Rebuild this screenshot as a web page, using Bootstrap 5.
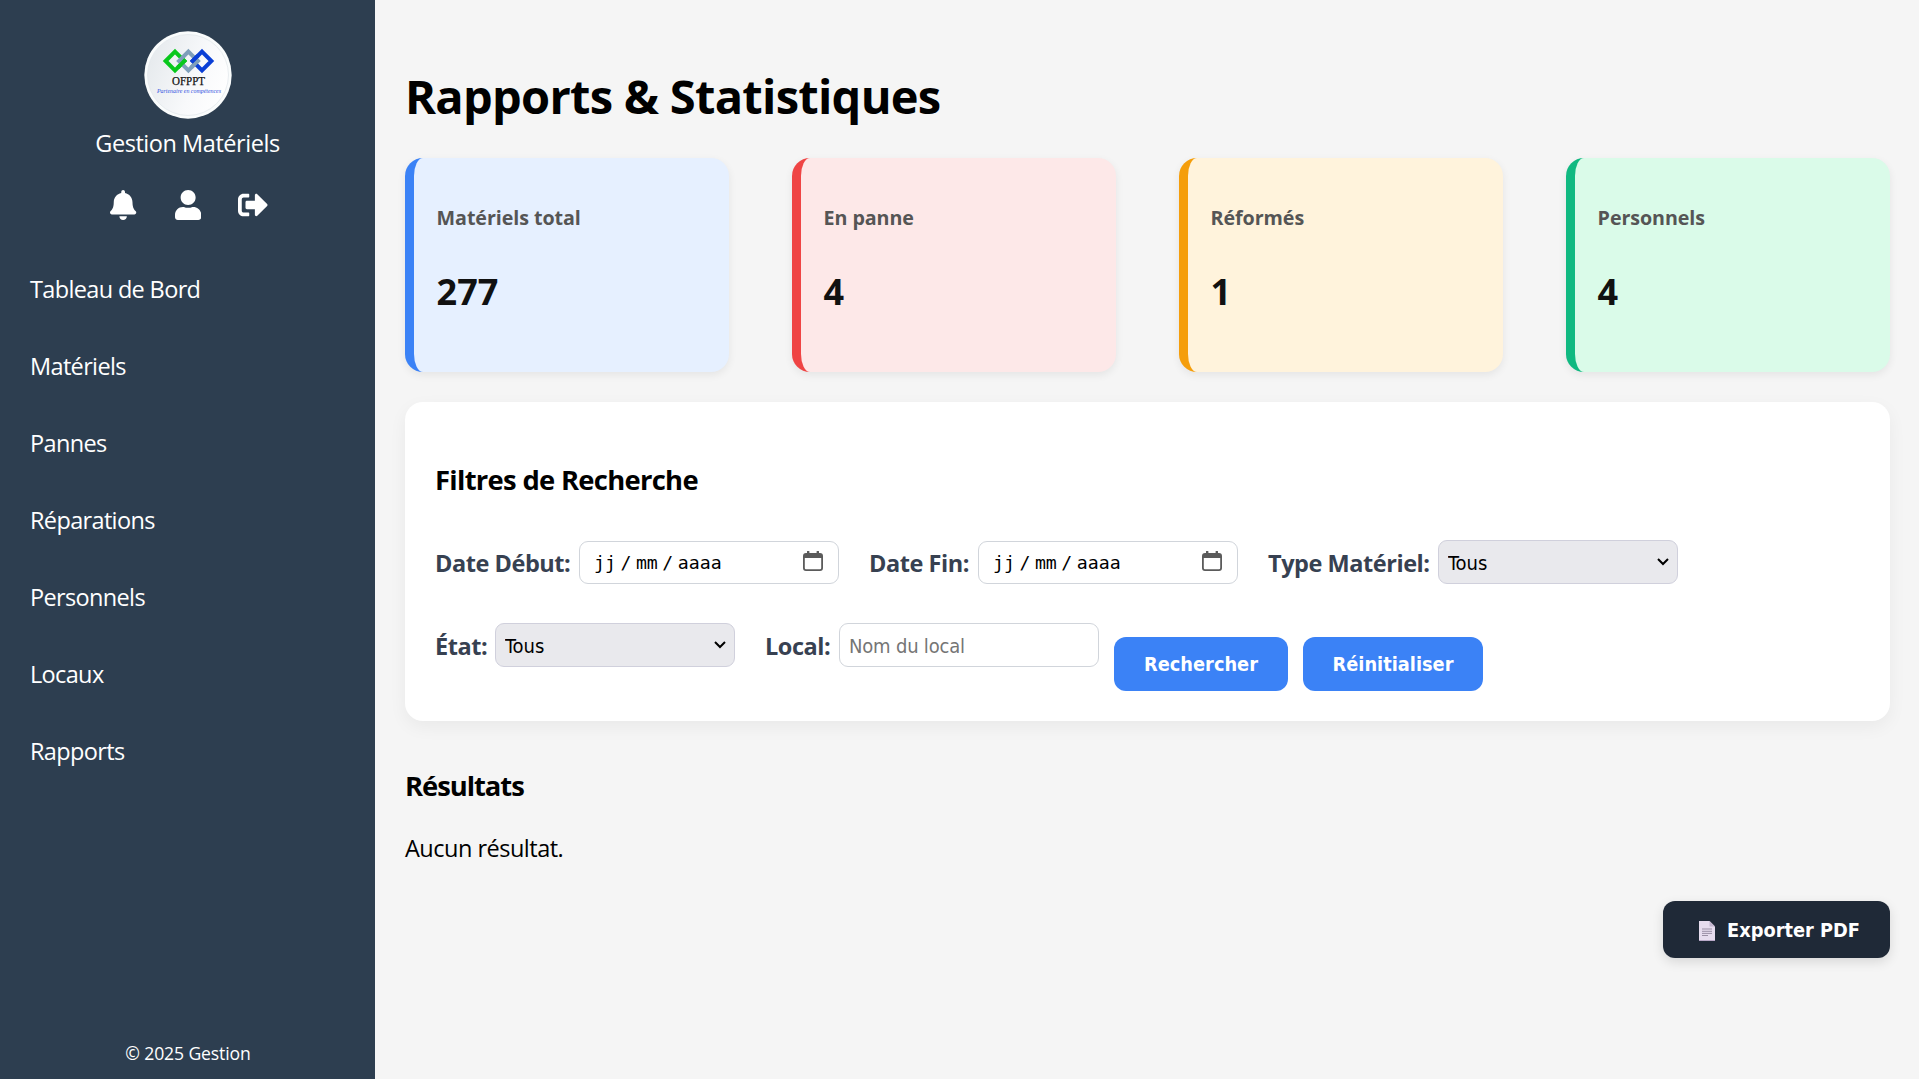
<!DOCTYPE html>
<html lang="fr">
<head>
<meta charset="utf-8">
<meta name="viewport" content="width=device-width, initial-scale=1">
<title>Rapports &amp; Statistiques</title>
<link href="https://cdn.jsdelivr.net/npm/bootstrap@5.3.0/dist/css/bootstrap.min.css" rel="stylesheet">
<style>
body{font-family:"Open Sans","Noto Sans",sans-serif;font-size:23.5px;letter-spacing:-.5px;color:#000;background:#f5f5f5;height:1079px;overflow:hidden}
.side{width:375px;background:#2d3e50;color:#fff;padding-top:31px}
.logo{width:88px;height:88px}
.brand{line-height:36px;margin-top:6px;letter-spacing:-.45px}
.tools{gap:34.5px;margin-top:26px;height:36px;padding-left:1px}
.tools a{width:30px;height:30px;color:#fff;display:flex;justify-content:center}
.tools svg{height:30px}
.side .menu{margin-top:28px}
.side .nav-link{color:#fff;padding:0 0 0 30px;line-height:77px;height:77px;letter-spacing:-.65px}
.copy{font-size:17.6px;line-height:28px;letter-spacing:-.12px;margin-bottom:12px;padding-left:1px}
main{padding:59px 29px 0 30px}
h1{font-size:47px;font-weight:700;line-height:74px;letter-spacing:-.72px;margin:0 0 25px}
.stats{gap:63px}
.stat{flex:1 1 0;height:214px;border:0 solid;border-left-width:9px;border-radius:18px;padding:42px 22px 0 22.6px;box-shadow:0 3px 9px rgba(0,0,0,.07)}
.stat h2{font-size:19.7px;font-weight:700;line-height:36px;color:#555;letter-spacing:-.08px;margin:0 0 31px}
.stat p{font-size:36px;font-weight:700;line-height:50px;letter-spacing:0;color:#111;margin:0}
.s-blue{background:#e6f0ff;border-color:#3b82f6}
.s-red{background:#fde8e8;border-color:#ef4444}
.s-amber{background:#fff3dc;border-color:#f59e0b}
.s-green{background:#dafbe9;border-color:#10b981}
.panel{height:319px;margin-top:30px;background:#fff;border-radius:18px;padding:58px 30px 0;box-shadow:0 6px 18px rgba(0,0,0,.05)}
h3{font-size:27.4px;font-weight:700;line-height:40px;letter-spacing:-.7px;margin:0}
.line{gap:30px}
.line-1{margin-top:40px;height:44px}
.line-2{margin-top:39px;height:68px}
.line label{font-weight:700;color:#374151;font-size:23.5px;line-height:46px;letter-spacing:-.45px;white-space:nowrap}
.lb-a{width:144px}.lb-b{width:109px}.lb-c{width:170px}.lb-d{width:60px}.lb-e{width:74px}
.line .form-control,.line .form-select{font-family:"DejaVu Sans Condensed","DejaVu Sans",sans-serif;font-stretch:condensed;font-size:20px;letter-spacing:0;line-height:32px;height:44px;border:1px solid #d1d5db;border-radius:9px;color:#000;padding:6px 9px}
.line .form-control{width:260px}
.line input.form-control{letter-spacing:-.2px;padding-top:7px;padding-bottom:5px}
.line .form-control::placeholder{color:#757575}
.line .form-select{width:240px;background-color:#e9e9ed;border-color:#d0d0dc;background-size:12px 8px;background-position:right 8px center;background-image:url("data:image/svg+xml,%3Csvg xmlns='http://www.w3.org/2000/svg' viewBox='0 0 12 8'%3E%3Cpath d='M1 1l5 5 5-5' fill='none' stroke='%23000' stroke-width='2'/%3E%3C/svg%3E")}
.line .datebox{height:43px;margin-top:1px;font-family:"DejaVu Sans Mono",monospace;font-size:18.2px;line-height:31px;padding:5px 15px 5px 14px}
.datebox i{font-style:normal;width:20px;text-align:center}
.datebox svg{width:20px;height:20px;margin-top:-3px}
.acts{gap:15px;margin-left:-15px;margin-top:14px}
.btn{font-family:"DejaVu Sans Condensed","DejaVu Sans",sans-serif;font-stretch:condensed;font-size:19.8px;font-weight:700;letter-spacing:0;color:#fff;border:0;border-radius:12px;padding:2px 0 0;height:54px}
.btn-blue{background:#3b82f6}
.b1{width:174px}.b2{width:180px}
.res{margin-top:45px;letter-spacing:-1.05px}
.none{margin:20px 0 0;line-height:44px;letter-spacing:-.5px}
.btn-pdf{background:#1f2937;width:227px;height:57px;padding-left:6px;box-shadow:0 4px 12px rgba(0,0,0,.12);margin-top:31px;gap:12px}
</style>
<script src="https://cdn.jsdelivr.net/npm/bootstrap@5.3.0/dist/js/bootstrap.bundle.min.js"></script>
</head>
<body class="d-flex">
<aside class="side d-flex flex-column flex-shrink-0">
  <div class="d-flex flex-column align-items-center">
    <svg class="logo" viewBox="0 0 88 88">
      <defs><linearGradient id="g" x1="0" x2="1" y1=".3" y2=".7"><stop offset="0" stop-color="#e6eaed"/><stop offset=".6" stop-color="#f8f9fb"/><stop offset="1" stop-color="#fff"/></linearGradient></defs>
      <circle cx="44" cy="44" r="43.7" fill="#fafcfc"/>
      <circle cx="44" cy="44" r="40.5" fill="url(#g)" stroke="#e3e9ec" stroke-width=".8"/>
      <g fill="none" stroke-width="4">
        <path d="M31 20.6 40.4 30 31 39.4 21.6 30z" stroke="#08c81c"/>
        <path d="M44.4 20.6 53.8 30 44.4 39.4 35 30z" stroke="#7f9fba"/>
        <path d="M58 20.6 67.4 30 58 39.4 48.6 30z" stroke="#0a3fd6"/>
        <path d="M41.7 28.7 33.7 36.7" stroke="#08c81c"/>
        <path d="M55.1 28.7 47.1 36.7" stroke="#7f9fba"/>
        <path d="M47.4 31.2 54 24.6" stroke="#0a3fd6"/>
      </g>
      <text x="28" y="54" textLength="33" lengthAdjust="spacingAndGlyphs" font-family="Liberation Serif, serif" font-size="12.4" letter-spacing="0" fill="#111" stroke="#111" stroke-width=".25">OFPPT</text>
      <text x="13" y="61.5" textLength="64" lengthAdjust="spacingAndGlyphs" font-family="Liberation Serif, serif" font-style="italic" font-size="6.6" letter-spacing="0" fill="#2f4fe0">Partenaire en compétences</text>
    </svg>
    <div class="brand">Gestion Matériels</div>
  </div>
  <div class="tools d-flex justify-content-center align-items-center">
    <a href="#" aria-label="Notifications"><svg viewBox="0 0 448 512" fill="currentColor"><path d="M224 512c35.32 0 63.97-28.65 63.97-64H160.03c0 35.35 28.65 64 63.97 64zm215.39-149.71c-19.32-20.76-55.47-51.99-55.47-154.29 0-77.7-54.48-139.9-127.94-155.16V32c0-17.67-14.32-32-31.98-32s-31.98 14.33-31.98 32v20.84C118.56 68.1 64.08 130.3 64.08 208c0 102.3-36.15 133.53-55.47 154.29-6 6.45-8.66 14.16-8.61 21.71.11 16.4 12.98 32 32.1 32h383.8c19.12 0 32-15.6 32.1-32 .05-7.55-2.61-15.27-8.61-21.71z"/></svg></a>
    <a href="#" aria-label="Profil"><svg viewBox="0 0 448 512" fill="currentColor"><path d="M224 256c70.7 0 128-57.3 128-128S294.7 0 224 0 96 57.3 96 128s57.3 128 128 128zm89.6 32h-16.7c-22.2 10.2-46.9 16-72.9 16s-50.6-5.8-72.9-16h-16.7C60.2 288 0 348.2 0 422.4V464c0 26.5 21.5 48 48 48h352c26.5 0 48-21.5 48-48v-41.6c0-74.2-60.2-134.4-134.4-134.4z"/></svg></a>
    <a href="#" aria-label="Déconnexion"><svg viewBox="0 0 512 512" fill="currentColor"><path d="M497 273L329 441c-15 15-41 4.5-41-17v-96H152c-13.3 0-24-10.7-24-24v-96c0-13.3 10.7-24 24-24h136V88c0-21.4 25.9-32 41-17l168 168c9.3 9.4 9.3 24.6 0 34zM192 436v-40c0-6.6-5.4-12-12-12H96c-17.7 0-32-14.3-32-32V160c0-17.7 14.3-32 32-32h84c6.6 0 12-5.4 12-12V76c0-6.6-5.4-12-12-12H96c-53 0-96 43-96 96v192c0 53 43 96 96 96h84c6.6 0 12-5.4 12-12z"/></svg></a>
  </div>
  <nav class="menu nav flex-column">
    <a class="nav-link" href="#">Tableau de Bord</a>
    <a class="nav-link" href="#">Matériels</a>
    <a class="nav-link" href="#">Pannes</a>
    <a class="nav-link" href="#">Réparations</a>
    <a class="nav-link" href="#">Personnels</a>
    <a class="nav-link" href="#">Locaux</a>
    <a class="nav-link" href="#">Rapports</a>
  </nav>
  <div class="copy mt-auto text-center">© 2025 Gestion</div>
</aside>
<main class="flex-grow-1">
  <h1>Rapports &amp; Statistiques</h1>
  <section class="stats d-flex">
    <div class="stat s-blue"><h2>Matériels total</h2><p>277</p></div>
    <div class="stat s-red"><h2>En panne</h2><p>4</p></div>
    <div class="stat s-amber"><h2>Réformés</h2><p>1</p></div>
    <div class="stat s-green"><h2>Personnels</h2><p>4</p></div>
  </section>
  <section class="panel">
    <h3>Filtres de Recherche</h3>
    <div class="line line-1 d-flex align-items-start">
      <div class="d-flex"><label class="lb-a">Date Début:</label><div class="form-control datebox d-flex"><span>jj</span><i>/</i><span>mm</span><i>/</i><span>aaaa</span>
        <svg class="ms-auto align-self-center" viewBox="0 0 20 20"><path d="M3 2h1V.8a1 1 0 0 1 2.4 0V2h7.2V.8a1 1 0 0 1 2.4 0V2h1a3 3 0 0 1 3 3v12a3 3 0 0 1-3 3H3a3 3 0 0 1-3-3V5a3 3 0 0 1 3-3zM1.8 7v10a1.200 1.200 0 0 0 1.200 1.200h14a1.200 1.200 0 0 0 1.200-1.200V7z" fill="#5b5b5b"/></svg></div></div>
      <div class="d-flex"><label class="lb-b">Date Fin:</label><div class="form-control datebox d-flex"><span>jj</span><i>/</i><span>mm</span><i>/</i><span>aaaa</span>
        <svg class="ms-auto align-self-center" viewBox="0 0 20 20"><path d="M3 2h1V.8a1 1 0 0 1 2.4 0V2h7.2V.8a1 1 0 0 1 2.4 0V2h1a3 3 0 0 1 3 3v12a3 3 0 0 1-3 3H3a3 3 0 0 1-3-3V5a3 3 0 0 1 3-3zM1.8 7v10a1.200 1.200 0 0 0 1.200 1.200h14a1.200 1.200 0 0 0 1.200-1.200V7z" fill="#5b5b5b"/></svg></div></div>
      <div class="d-flex"><label class="lb-c" for="type">Type Matériel:</label><select id="type" class="form-select"><option>Tous</option></select></div>
    </div>
    <div class="line line-2 d-flex align-items-start">
      <div class="d-flex"><label class="lb-d" for="etat">État:</label><select id="etat" class="form-select"><option>Tous</option></select></div>
      <div class="d-flex"><label class="lb-e" for="local">Local:</label><input id="local" class="form-control" placeholder="Nom du local"></div>
      <div class="acts d-flex"><button class="btn btn-blue b1">Rechercher</button><button class="btn btn-blue b2">Réinitialiser</button></div>
    </div>
  </section>
  <h3 class="res">Résultats</h3>
  <p class="none">Aucun résultat.</p>
  <div class="d-flex justify-content-end">
    <button class="btn btn-pdf d-flex align-items-center justify-content-center">
      <svg width="16" height="20" viewBox="0 0 16 20"><path d="M0 0h10.500L16 5.500V20H0z" fill="#e6dcee"/><path d="M10.500 0 16 5.500h-5.500z" fill="#c3b6cf"/><path d="M0 19.500h16" stroke="#b9a9c8"/><path d="M3 8h10M3 10.300h10M3 12.400h10M3 14.500h6" stroke="#9a8fa5" stroke-width="1"/></svg>
      <span>Exporter PDF</span>
    </button>
  </div>
</main>
</body>
</html>
